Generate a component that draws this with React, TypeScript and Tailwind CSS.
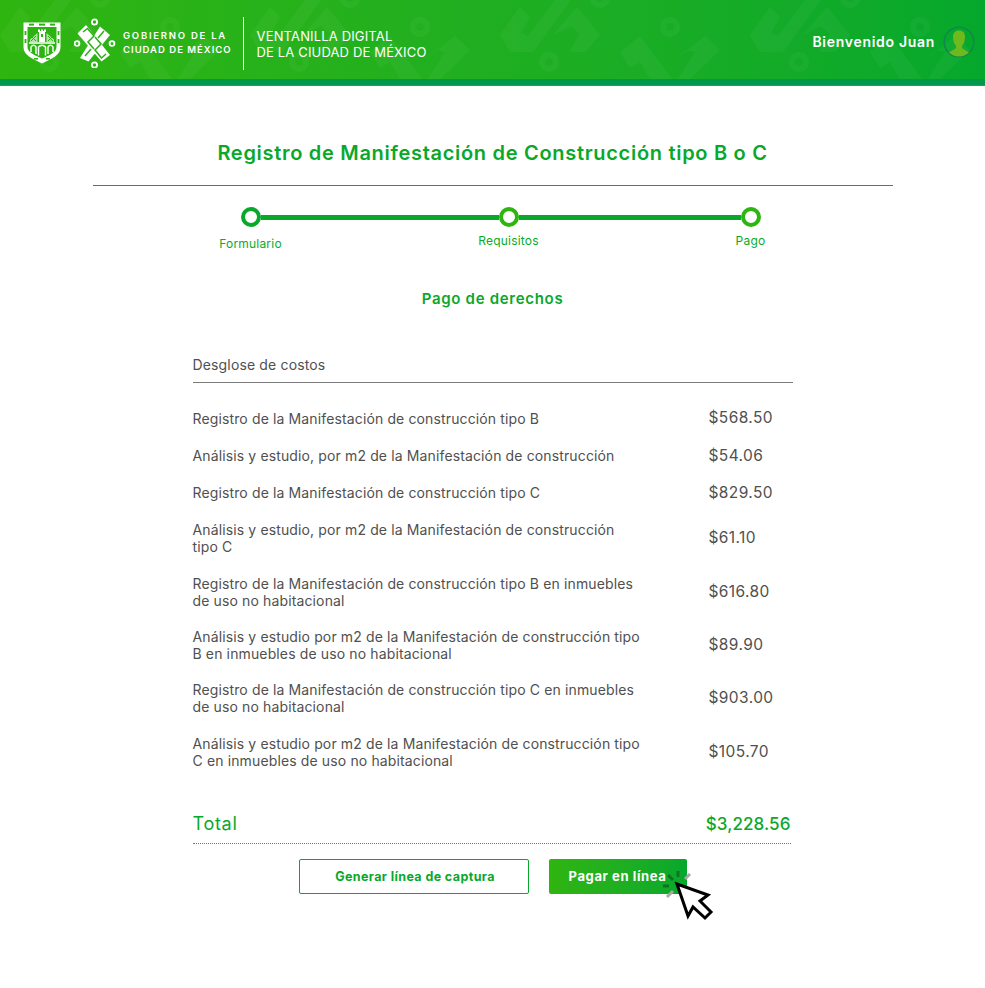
import React from "react";

const rows: [string, string][] = [
  ["Registro de la Manifestación de construcción tipo B", "$568.50"],
  ["Análisis y estudio, por m2 de la Manifestación de construcción", "$54.06"],
  ["Registro de la Manifestación de construcción tipo C", "$829.50"],
  ["Análisis y estudio, por m2 de la Manifestación de construcción tipo C", "$61.10"],
  ["Registro de la Manifestación de construcción tipo B en inmuebles de uso no habitacional", "$616.80"],
  ["Análisis y estudio por m2 de la Manifestación de construcción tipo B en inmuebles de uso no habitacional", "$89.90"],
  ["Registro de la Manifestación de construcción tipo C en inmuebles de uso no habitacional", "$903.00"],
  ["Análisis y estudio por m2 de la Manifestación de construcción tipo C en inmuebles de uso no habitacional", "$105.70"],
];

function Pattern() {
  return (
    <svg className="absolute inset-0 h-full w-full" aria-hidden="true">
      <defs>
        <pattern id="tile" x="0" y="0" width="250" height="79" patternUnits="userSpaceOnUse">
          <g fill="#ffffff" fillOpacity="0.035">
            <polygon points="0,35 20,7 30,17 21,33 28,36 55,0 71,0 33,52 10,52" />
            <polygon points="53,35 77,7 100,35 85,52 69,52 80,34 71,26" />
            <polygon points="120,52 140,36 172,79 150,79 140,62 130,68" />
            <polygon points="175,60 205,36 220,50 190,79 178,79 195,52 186,50" />
          </g>
          <g fill="none" stroke="#ffffff" strokeOpacity="0.035" strokeWidth="6">
            <circle cx="170" cy="27" r="7" />
            <circle cx="49" cy="62" r="7" />
            <circle cx="100" cy="-2" r="7" />
          </g>
        </pattern>
      </defs>
      <rect width="100%" height="100%" fill="url(#tile)" />
    </svg>
  );
}

function Shield() {
  return (
    <svg width="38" height="42" viewBox="0 0 38 42" className="shrink-0" aria-hidden="true">
      <path d="M0.5 0.5H37.5V25C37.5 33 30 36 19 41.5C8 36 0.5 33 0.5 25Z" fill="#ffffff" />
      <path d="M4.5 5H33.5V25C33.5 30 27 33 19 36.5C11 33 4.5 30 4.5 25Z" fill="#2cb312" />
      <g fill="#2cb312">
        <rect x="6" y="1.6" width="5" height="2" />
        <rect x="16" y="1.6" width="6" height="2" />
        <rect x="27" y="1.6" width="5" height="2" />
        <rect x="1.6" y="9" width="1.8" height="4" />
        <rect x="1.6" y="17" width="1.8" height="4" />
        <rect x="34.6" y="9" width="1.8" height="4" />
        <rect x="34.6" y="17" width="1.8" height="4" />
        <rect x="11" y="36" width="4" height="1.6" />
        <rect x="23" y="36" width="4" height="1.6" />
      </g>
      <g fill="#ffffff">
        <rect x="16" y="9" width="6" height="11" />
        <rect x="15" y="7.5" width="2" height="2.5" />
        <rect x="18" y="7.5" width="2" height="2.5" />
        <rect x="21" y="7.5" width="2" height="2.5" />
      </g>
      <rect x="18" y="12" width="2" height="3" fill="#2cb312" />
      <path d="M7 17.5L14.5 11V20H7ZM31 17.5L23.5 11V20H31Z" fill="#d6f0cc" opacity="0.8" />
      <path d="M8 14L13 19M13 14L8 19M25 14L30 19M30 14L25 19" stroke="#2cb312" strokeWidth="1" />
      <path d="M6 21H32M8 30V25Q10.5 21.5 13 25V32M15.5 33.5V25Q19 21.5 22.5 25V33.5M25 32V25Q27.5 21.5 30 25V30" fill="none" stroke="#ffffff" strokeWidth="1.4" />
    </svg>
  );
}

function CdmxLogo() {
  return (
    <svg width="42" height="50" viewBox="0 0 42 50" className="shrink-0" aria-hidden="true">
      <g fill="none" stroke="#ffffff" strokeWidth="1.8">
        <circle cx="20.5" cy="4" r="2.6" />
        <circle cx="20.5" cy="47" r="2.6" />
        <circle cx="3" cy="25.5" r="2.4" />
        <circle cx="38" cy="25.5" r="2.4" />
      </g>
      <g fill="#ffffff">
        <polygon points="3.5,15.5 12,7 36,37 27.5,43.5" />
        <polygon points="26,8.5 36,17 14.5,43.5 6,40" />
      </g>
      <g fill="none" stroke="#28b013" strokeWidth="1.5">
        <path d="M9 14L13.5 10.5L20 18L14 24L20 31" />
        <path d="M32 36L27.5 40L21 32L27 26L21 19" />
        <path d="M30 13L24 20" />
        <path d="M11 38L17 31" />
      </g>
    </svg>
  );
}

function Avatar() {
  return (
    <svg width="32" height="32" viewBox="0 0 32 32" className="shrink-0" aria-hidden="true">
      <defs>
        <clipPath id="av"><circle cx="16" cy="16" r="14.5" /></clipPath>
      </defs>
      <circle cx="16" cy="16" r="14.8" fill="none" stroke="#0d8a4e" strokeWidth="1.6" />
      <path clipPath="url(#av)" d="M16 4.5C11.8 4.5 9.8 7.5 10 11.5C10.2 15.5 11.5 18.5 13 19.8V22C11 24 7 25 4 28.5V32H28V28.5C25 25 21 24 19 22V19.8C20.5 18.5 21.8 15.5 22 11.5C22.2 7.5 20.2 4.5 16 4.5Z" fill="#6fb81e" />
    </svg>
  );
}

function Cursor() {
  return (
    <svg width="64" height="64" viewBox="0 0 64 64" className="absolute left-[110px] top-[5px] overflow-visible" aria-hidden="true">
      <g strokeWidth="3" fill="none">
        <path d="M19 7V13" stroke="#0c7424" />
        <path d="M9 11L14 16" stroke="#0c7424" />
        <path d="M31 10L26 15" stroke="#a8a8a8" />
        <path d="M4 22H10" stroke="#0c7424" />
        <path d="M8 33L14 27" stroke="#a8a8a8" />
      </g>
      <path d="M18 20L29 52L34 43L46 54L52 48L41 37L49 31Z" fill="#ffffff" stroke="#000000" strokeWidth="3" strokeLinejoin="miter" />
    </svg>
  );
}

function Step({ label, big, color }: { label: string; big?: boolean; color: string }) {
  return (
    <div className="relative h-[20px] w-[20px] shrink-0">
      <div className={`h-[20px] w-[20px] rounded-full border-[4px] bg-white ${color}`} />
      <div className={`absolute left-1/2 -translate-x-1/2 whitespace-nowrap text-[12px] leading-[16px] tracking-[0.2px] text-[#0aab2a] ${big ? "top-[29px]" : "top-[26px]"}`}>
        {label}
      </div>
    </div>
  );
}

export default function App() {
  return (
    <div className="min-h-[988px] bg-white text-[#505050]" style={{ fontFamily: "Inter, 'Liberation Sans', sans-serif" }}>
      <header>
        <div className="relative flex h-[79px] items-center justify-between bg-gradient-to-r from-[#2fb50f] to-[#05a82c] pl-[23px] pr-[10px] pt-[7px] text-white">
          <Pattern />
          <div className="relative flex items-center">
            <Shield />
            <div className="ml-[13px]"><CdmxLogo /></div>
            <div className="ml-[7px] text-[9.5px] font-semibold leading-[14px] tracking-[1px]">
              <div className="tracking-[1.75px]">GOBIERNO DE LA</div>
              <div>CIUDAD DE MÉXICO</div>
            </div>
            <div className="ml-[11px] h-[53px] w-px bg-white" />
            <div className="ml-[13px] pt-[2px] text-[13px] leading-[16.5px] tracking-[0.15px]">
              <div>VENTANILLA DIGITAL</div>
              <div>DE LA CIUDAD DE MÉXICO</div>
            </div>
          </div>
          <div className="relative -mt-[3px] flex items-center gap-[8px]">
            <span className="text-[14px] font-semibold tracking-[0.7px]">Bienvenido Juan</span>
            <Avatar />
          </div>
        </div>
        <div className="h-[7px] border-b border-[#1aa83a] bg-[#00984a]" />
      </header>

      <main className="flex flex-col items-center">
        <h1 className="mt-[53px] text-[20px] font-semibold leading-[28px] tracking-[0.7px] text-[#0aa82a]">
          Registro de Manifestación de Construcción tipo B o C
        </h1>
        <div className="mt-[18px] h-px w-[800px] bg-[#6b6b6b]" />

        <div className="ml-[16px] mt-[21px] flex h-[20px] w-[520px] items-center">
          <Step label="Formulario" big color="border-[#0aa82a]" />
          <div className="h-[5px] w-[238px] bg-[#0aa82a]" />
          <Step label="Requisitos" color="border-[#2fb50f]" />
          <div className="h-[5px] w-[222px] bg-[#0aa82a]" />
          <Step label="Pago" color="border-[#2fb50f]" />
        </div>

        <h2 className="mt-[62px] text-[15px] font-semibold leading-[20px] tracking-[0.7px] text-[#0aa82a]">Pago de derechos</h2>

        <section className="mt-[46px] w-[600px]">
          <div className="border-b border-[#7a7a7a] pb-[8px] text-[14px] leading-[19px] tracking-[0.15px]">Desglose de costos</div>
          <div className="mt-[16.5px]">
            {rows.map(([t, p]) => (
              <div key={t} className="flex items-center py-[9.7px]">
                <div className="w-[516px] pr-[67px] text-[14px] leading-[17px] tracking-[0.13px]">{t}</div>
                <div className="text-[15.5px] leading-[18px] tracking-[0.4px]">{p}</div>
              </div>
            ))}
          </div>
          <div className="mt-[33.5px] flex w-[598px] items-center justify-between border-b border-dotted border-[#4a8a55] pb-[7px] text-[18px] leading-[24px] text-[#0aa82a]">
            <span className="tracking-[0.7px]">Total</span>
            <span className="text-[17px] font-medium tracking-[0.1px]">$3,228.56</span>
          </div>
        </section>

        <div className="mt-[15px] flex gap-[20px]">
          <button className="h-[35px] w-[230px] rounded-[2px] border border-[#0aa82a] bg-white pl-[3px] pt-[2px] text-[12.5px] font-bold tracking-[0.4px] text-[#0aa82a]">
            Generar línea de captura
          </button>
          <div className="relative">
            <button className="h-[35px] w-[138px] rounded-[2px] bg-gradient-to-r from-[#2fb50f] to-[#05a82c] pt-[1px] text-[13px] font-bold tracking-[0.6px] text-white">
              Pagar en línea
            </button>
            <Cursor />
          </div>
        </div>
      </main>
    </div>
  );
}
